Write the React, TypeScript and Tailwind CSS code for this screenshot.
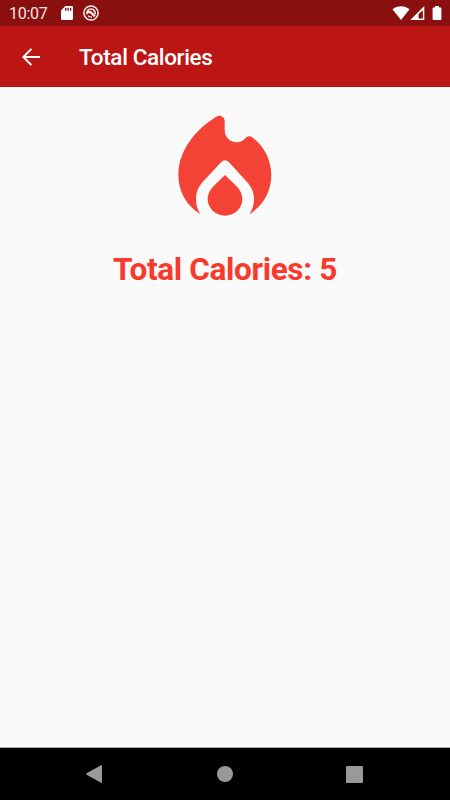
function StatusBar() {
  return (
    <div className="flex h-[26px] items-center bg-[#8a1010] pr-[8px] pl-[9px] text-white">
      <span className="w-[52px] pt-[2px] text-[16px] leading-none tracking-[-0.3px] text-[#f3e4e4]">10:07</span>
      <svg className="h-[14px] w-[12px]" viewBox="0 0 12 14">
        <path
          fill="#fff"
          fillRule="evenodd"
          d="M4.4 0H10.8Q12 0 12 1.2V12.8Q12 14 10.8 14H1.2Q0 14 0 12.8V4.4ZM4 1.8V4.8H5.4V1.8ZM6.4 1.8V4.8H7.8V1.8ZM8.9 1.8V4.8H10.3V1.8Z"
        />
      </svg>
      <svg className="ml-[10px] h-[16px] w-[16px]" viewBox="0 0 16 16" fill="none" stroke="#f8eeee">
        <circle cx="8" cy="8" r="7.1" strokeWidth="1.5" />
        <path d="M4.2 9.2C3.5 6 5.6 4 8 4C11 4 12.6 6.6 12 9.4" strokeWidth="1.7" />
        <path d="M5 7.2H7.6L11.8 11.4" strokeWidth="2.2" />
        <path d="M5 10.6C6 12 7.4 12.2 9 12" strokeWidth="1.3" />
      </svg>

      <div className="ml-auto flex items-center">
        <svg className="h-[14px] w-[18px]" viewBox="0 0 18 14">
          <path fill="#fff" d="M9 14L0.5 3.2C5.2 -0.9 12.8 -0.9 17.5 3.2Z" />
        </svg>
        <svg className="h-[14px] w-[15px]" viewBox="0 0 15 14">
          <path fill="#fff" fillRule="evenodd" d="M0.3 14L14.3 0V14ZM8.6 7.9V12.6H12.9V4.2Z" />
        </svg>
        <svg className="ml-[7px] h-[14px] w-[10px]" viewBox="0 0 10 14">
          <path
            fill="#fff"
            d="M3 0H7V1.4H8.5Q9.4 1.4 9.4 2.3V13.1Q9.4 14 8.5 14H1.5Q0.6 14 0.6 13.1V2.3Q0.6 1.4 1.5 1.4H3Z"
          />
        </svg>
      </div>
    </div>
  );
}

function AppBar({ title }: { title: string }) {
  return (
    <header className="flex h-[61px] items-center bg-[#bb1614] pl-[22px] text-white">
      <svg className="h-[18px] w-[18px]" viewBox="0 0 18 18" fill="none" stroke="#fff" strokeWidth="2">
        <path d="M18 9H1.6M9.4 0.9L1.4 9L9.4 17.1" />
      </svg>
      <h1 className="ml-[39px] pt-[2px] text-[22.5px] leading-none font-medium tracking-[-0.36px]">{title}</h1>
    </header>
  );
}

function FlameIcon() {
  return (
    <svg className="h-[120px] w-[110px]" viewBox="0 0 330 360" fill="#f44336">
      <path d="M91 328C50 302 25 260 25 210C25 135 78 72 139 35C150 28 164 36 164 49V76C164 96 180 112 200 112C211 112 220 107 227 99C232 93 240 92 246 97C282 122 304 166 304 210C304 260 279 302 238 328C248 314 252 298 252 281C252 262 244 246 232 232L177 172Q165 160 153 172L97 232C85 246 78 262 78 281C78 298 82 314 91 328Z" />
      <path d="M165 210L201 245C211 255 217 268 217 282C217 310 194 332 165 332C136 332 113 310 113 282C113 268 119 255 129 245Z" />
    </svg>
  );
}

function NavigationBar() {
  return (
    <nav className="flex h-[53px] items-center justify-between border-t border-[#aaa] bg-black pr-[87px] pl-[86px]">
      <svg className="h-[18px] w-[16px]" viewBox="0 0 16 18">
        <path fill="#999" d="M15 0.3Q16 -0.2 16 1V17Q16 18.2 15 17.7L0.6 9.7Q-0.2 9 0.6 8.3Z" />
      </svg>
      <span className="ml-px h-4 w-4 rounded-full bg-[#999]" />
      <span className="h-[17px] w-[17px] rounded-[1px] bg-[#999]" />
    </nav>
  );
}

export default function App() {
  const calories = 5;

  return (
    <div className="flex h-screen flex-col overflow-hidden bg-[#fafafa] font-['Roboto',sans-serif]">
      <StatusBar />
      <AppBar title="Total Calories" />
      <main className="flex flex-1 flex-col items-center pt-[18px]">
        <FlameIcon />
        <p className="mt-[26px] text-[31.5px] leading-[37px] font-bold tracking-[-0.35px] whitespace-nowrap text-[#f8392c]">
          Total Calories: {calories}
        </p>
      </main>
      <NavigationBar />
    </div>
  );
}
